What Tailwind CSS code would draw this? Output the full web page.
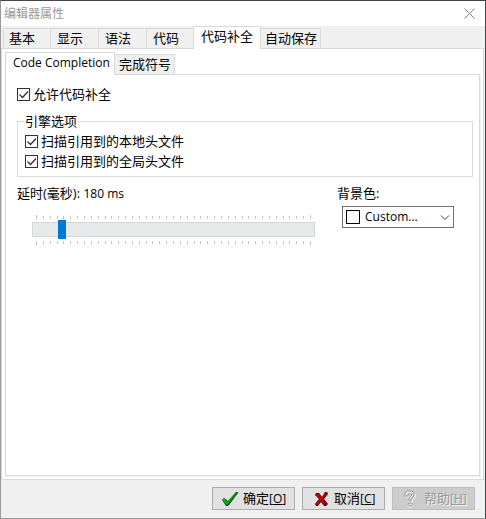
<!DOCTYPE html>
<html lang="zh-CN">
<head>
    <meta charset="UTF-8">
    <meta name="viewport" content="width=device-width, initial-scale=1.0">
    <script src="https://cdn.jsdelivr.net/npm/@tailwindcss/browser@4"></script>
    <title>编辑器属性</title>
</head>
<body class="font-['Open_Sans','Noto_Sans_CJK_SC',sans-serif] text-[13px] leading-5 text-black">
    <div class="flex min-h-screen flex-col border border-t-[#444549] border-r-[#444549] border-b-[#999999] border-l-[#999999] bg-[#f0f0f0]">
        <!-- 标题栏 -->
        <header class="flex h-[25px] items-center justify-between bg-white pr-2.5 pl-[3px]">
            <h1 class="text-xs text-[#999999]">编辑器属性</h1>
            <button type="button" aria-label="关闭">
                <svg class="size-[11px]" viewBox="0 0 11 11" fill="none" stroke="#8c8c8c"><path d="M.5.5l10 10M10.5.5l-10 10"/></svg>
            </button>
        </header>

        <!-- 主选项卡 -->
        <nav class="flex h-[22px] items-end pl-0.5" role="tablist">
            <button type="button" role="tab" class="h-5 w-12 border border-b-0 border-[#d9d9d9] pb-0.5 pl-[5px] text-left leading-4">基本</button>
            <button type="button" role="tab" class="h-5 w-12 border border-b-0 border-l-0 border-[#d9d9d9] pb-0.5 pl-1.5 text-left leading-4">显示</button>
            <button type="button" role="tab" class="h-5 w-12 border border-b-0 border-l-0 border-[#d9d9d9] pb-0.5 pl-1.5 text-left leading-4">语法</button>
            <button type="button" role="tab" class="h-5 w-[47px] border-t border-[#d9d9d9] pb-0.5 pl-1.5 text-left leading-4">代码</button>
            <button type="button" role="tab" aria-selected="true" class="relative -mb-px -ml-px h-[23px] w-[68px] border border-b-0 border-[#d9d9d9] bg-white pb-1 pl-[7px] text-left leading-4">代码补全</button>
            <button type="button" role="tab" class="h-5 w-[60px] border border-b-0 border-l-0 border-[#d9d9d9] pb-0.5 pl-1 text-left leading-4">自动保存</button>
        </nav>

        <main class="mr-px flex flex-1 flex-col border border-[#d9d9d9] bg-white p-[3px]">
            <!-- 子选项卡 -->
            <nav class="flex h-[22px] items-end" role="tablist">
                <button type="button" role="tab" aria-selected="true" class="relative -mb-px h-[23px] w-[110px] border border-b-0 border-[#d9d9d9] bg-white pb-0.5 pl-[7px] text-left text-xs leading-4">Code Completion</button>
                <button type="button" role="tab" class="h-5 w-[60px] border border-b-0 border-l-0 border-[#d9d9d9] bg-[#f0f0f0] pb-0.5 pl-1 text-left leading-4">完成符号</button>
            </nav>

            <section class="flex-1 border border-[#d9d9d9] pt-[9px] pr-1.5 pl-[11px] shadow-[1px_1px_0_#f0f0f0]">
                <label class="flex items-center gap-[3px]">
                    <span class="relative size-[13px]">
                        <input type="checkbox" checked class="block size-[13px] appearance-none border border-[#333333] bg-white">
                        <svg class="pointer-events-none absolute inset-0 size-[13px]" viewBox="0 0 13 13" fill="none" stroke="#333" stroke-width="1.3"><path d="M2.500 6.500l3 3 5.500-6"/></svg>
                    </span>
                    允许代码补全
                </label>

                <fieldset class="mt-[7px] border border-[#dcdcdc] px-[7px] pb-[5px]">
                    <legend>引擎选项</legend>
                    <label class="flex items-center gap-[3px]">
                        <span class="relative size-[13px]">
                            <input type="checkbox" checked class="block size-[13px] appearance-none border border-[#333333] bg-white">
                            <svg class="pointer-events-none absolute inset-0 size-[13px]" viewBox="0 0 13 13" fill="none" stroke="#333" stroke-width="1.3"><path d="M2.500 6.500l3 3 5.500-6"/></svg>
                        </span>
                        扫描引用到的本地头文件
                    </label>
                    <label class="flex items-center gap-[3px]">
                        <span class="relative size-[13px]">
                            <input type="checkbox" checked class="block size-[13px] appearance-none border border-[#333333] bg-white">
                            <svg class="pointer-events-none absolute inset-0 size-[13px]" viewBox="0 0 13 13" fill="none" stroke="#333" stroke-width="1.3"><path d="M2.500 6.500l3 3 5.500-6"/></svg>
                        </span>
                        扫描引用到的全局头文件
                    </label>
                </fieldset>

                <div class="mt-1.5 flex">
                    <div class="flex-1">
                        <label for="delay">延时(毫秒): <span class="text-xs">180 ms</span></label>
                        <!-- 滑块与刻度 -->
                        <div class="mt-3 mr-[22px] ml-[15px]">
                            <svg id="ticks-top" class="ml-1 block h-1 w-[275px]" fill="#c4c4c4"></svg>
                            <input id="delay" type="range" min="0" max="2000" value="180" class="my-px block h-[19px] w-full appearance-none bg-transparent [&::-webkit-slider-runnable-track]:h-[15px] [&::-webkit-slider-runnable-track]:border [&::-webkit-slider-runnable-track]:border-[#d6d6d6] [&::-webkit-slider-runnable-track]:bg-[#e7eaea] [&::-webkit-slider-thumb]:-mt-[3px] [&::-webkit-slider-thumb]:h-[19px] [&::-webkit-slider-thumb]:w-2 [&::-webkit-slider-thumb]:appearance-none [&::-webkit-slider-thumb]:bg-[#007ad9]">
                            <svg id="ticks-bottom" class="mt-0.5 ml-1 block h-1 w-[275px]" fill="#c4c4c4"></svg>
                        </div>
                    </div>
                    <div class="w-[136px]">
                        <label for="background">背景色:</label>
                        <div class="relative mt-[3px] ml-[5px] h-[22px] w-28">
                            <select id="background" class="block size-full appearance-none border border-[#707070] bg-white pl-[22px] text-xs">
                                <option>Custom...</option>
                            </select>
                            <span class="pointer-events-none absolute top-1 left-1 size-3.5 border border-black"></span>
                            <svg class="pointer-events-none absolute top-[9px] right-1 h-[6px] w-[10px]" viewBox="0 0 10 6" fill="none" stroke="#444"><path d="M1 .5l4 4 4-4"/></svg>
                        </div>
                    </div>
                </div>
            </section>
        </main>

        <!-- 底部按钮 -->
        <footer class="flex justify-end gap-[7px] pt-[7px] pr-2.5 pb-2">
            <button type="button" class="flex h-[23px] w-[83px] items-center border border-[#adadad] bg-[#e1e1e1] pl-[9px]">
                <svg class="mr-[5px] h-4 w-4" viewBox="0 0 16 16"><path d="M0 9l2-2 4 3 8-9h2v1L7 14l-1 1H4z" fill="#064f18"/><path d="M0 9l2-2 3 4 9-10h1L6 13l-1 1z" fill="#08b51a"/></svg>
                <span class="pb-0.5">确定<span class="text-xs">[<u>O</u>]</span></span>
            </button>
            <button type="button" class="flex h-[23px] w-[83px] items-center border border-[#adadad] bg-[#e1e1e1] pl-3">
                <svg class="mr-1.5 h-4 w-[13px]" viewBox="0 0 13 16"><path d="M1 2h3l3 4 3-5h2l1 2-4 5 4 5-2 2H9l-3-4-3 4H1l-1-2 4-5-4-4z" fill="#520000"/><path d="M1 3h3l3 4 3-5h1l1 1-4 5 3 5-1 1H9L6 10l-3 4H2l-1-1 4-5-4-4z" fill="#b50808"/></svg>
                <span class="pb-0.5">取消<span class="text-xs">[<u>C</u>]</span></span>
            </button>
            <button type="button" disabled class="flex h-[23px] w-[83px] items-center border border-[#bfbfbf] bg-[#cccccc] pl-[11px] text-[#969696]">
                <svg class="mr-2 h-[18px] w-3" viewBox="0 0 12 18" fill="none" stroke-linejoin="round"><path d="M2 7V4l2-2h4l3 2v3L8 10v2H5V9l3-3V5L6 4 4 5v2zM5 14h2l1 1v1l-1 1H5l-1-1v-1z" stroke="#fff"/><path d="M1 6V3l2-2h5l2 2v3L7 9v2H5V8l3-3-1-1H5L4 5v1zM5 13h2l1 1v1l-1 1H5l-1-1v-1z" stroke="#999"/></svg>
                <span class="pb-0.5 [text-shadow:1px_1px_0_#f4f4f4]">帮助<span class="text-xs">[<u>H</u>]</span></span>
            </button>
        </footer>
    </div>

    <script>
        // 41 个刻度，首尾稍长
        function drawTicks(id, atBottom) {
            const svg = document.getElementById(id);
            for (let i = 0; i <= 40; i++) {
                const end = i === 0 || i === 40;
                const tick = document.createElementNS('http://www.w3.org/2000/svg', 'rect');
                tick.setAttribute('x', Math.round(i * 274 / 40));
                tick.setAttribute('y', end || atBottom ? 0 : 1);
                tick.setAttribute('width', 1);
                tick.setAttribute('height', end ? 4 : 3);
                svg.appendChild(tick);
            }
        }

        drawTicks('ticks-top', false);
        drawTicks('ticks-bottom', true);
    </script>
</body>
</html>
